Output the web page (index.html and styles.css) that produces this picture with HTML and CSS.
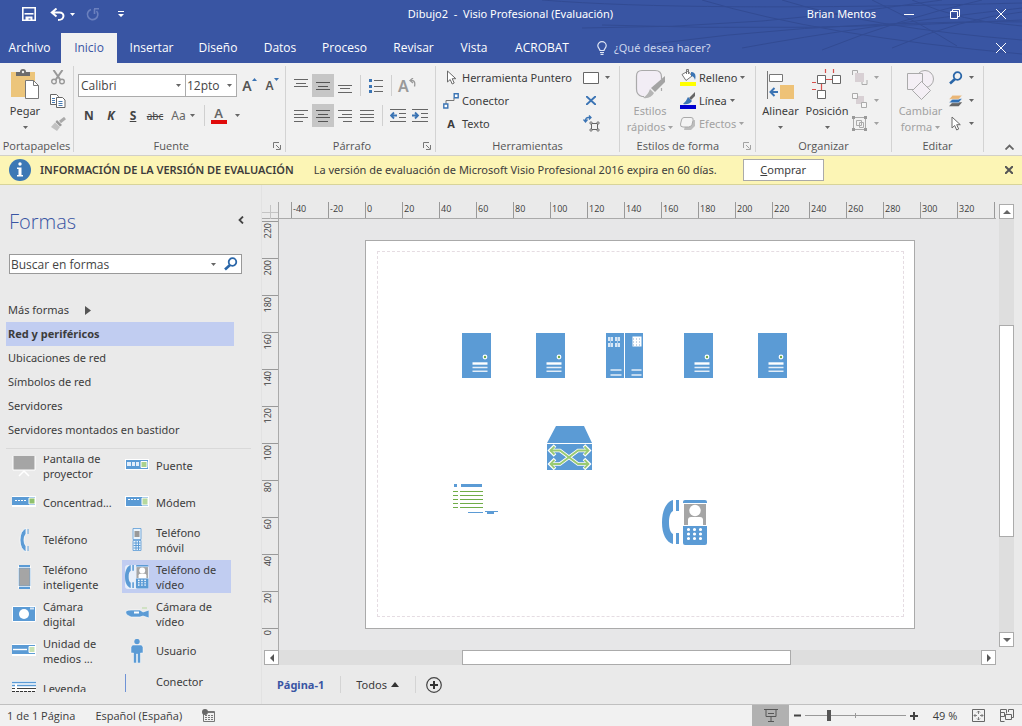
FILE: index.html
```html
<!DOCTYPE html>
<html lang="es">
<head>
<meta charset="utf-8">
<title>Dibujo2 - Visio Profesional (Evaluación)</title>
<link rel="stylesheet" href="styles.css">
</head>
<body>
<svg class="defs" aria-hidden="true">
  <symbol id="caret" viewBox="0 0 5 3"><path d="M0 0h5L2.500 3z" fill="currentColor"/></symbol>
  <symbol id="launcher" viewBox="0 0 8 8"><path d="M.5 6V.5H6M3 3l3.500 3.500M7.500 3v4.500H3" fill="none" stroke="currentColor"/></symbol>
  <symbol id="glass" viewBox="0 0 14 14"><circle cx="8.500" cy="5" r="3.800" fill="none" stroke="#2a66a8" stroke-width="1.800"/><path d="M6 8l-5 4.500" stroke="#2a66a8" stroke-width="2.600"/></symbol>
  <symbol id="pointer" viewBox="0 0 11 15"><path d="M1.500 1v11l2.700-2.500 2 4.500 2-1-2-4.300h3.600z" fill="#fff" stroke="#6a6a6a"/></symbol>
  <symbol id="server" viewBox="0 0 30 45"><path fill="#5b9bd5" d="M0 0h29v45H0z"/><circle cx="23" cy="24" r="1.800" fill="#70ad47" stroke="#fff" stroke-width="1.200"/><path d="M10.500 30.500h15" stroke="#fff" stroke-width="2.400"/><path d="M10.500 34.500h15M10.500 38.200h15" stroke="#e4eef8" stroke-width="1.600"/></symbol>
  <symbol id="videophone" viewBox="0 0 46 46"><path fill="#5b9bd5" d="M11 0v11C8 13 7 17 7 22.500S8 32 11 34v10C4 42 0 34 0 22.500S4 2 11 0zM14 0h3v11h-3zM14 33h3v11h-3zM23 0h20a2 2 0 0 1 2 2v1H21V2a2 2 0 0 1 2-2zM21 26h24v17a2 2 0 0 1-2 2H23a2 2 0 0 1-2-2z"/><path fill="#a5a5a5" d="M22 4h22v21H22z"/><g fill="#fff"><circle cx="33" cy="10.500" r="5.700"/><path d="M26 25v-5q0-3 3-3h9q3 0 3 3v5z"/></g><path d="M26.500 29.500h12.500M26.500 34h12.500M26.500 38.500h12.500" fill="none" stroke="#fff" stroke-width="3.200" stroke-linecap="round" stroke-dasharray="0 6"/></symbol>
</svg>

<header class="top">
  <svg class="swirls" viewBox="0 0 480 63" aria-hidden="true"><path d="M0 0Q150 12 480 3M60 25Q260 32 480 20M40 28Q220 28 400 0M110 44Q260 24 420 22T480 34M160 0Q280 36 480 54M240 0Q330 28 480 40M280 50Q360 18 440 0M350 48Q420 18 480 12M370 0Q420 22 480 26M200 48Q320 26 480 8M330 0Q380 24 415 46" fill="none" stroke="#324b93"/></svg>
  <div class="titlebar">
    <div class="quick">
      <button aria-label="Guardar"><svg width="14" height="14" viewBox="0 0 14 14"><path d="M.8.800h12.400v12.400H.8z" fill="none" stroke="#fff" stroke-width="1.600"/><path d="M2.500 6.800h9" stroke="#fff" stroke-width="1.600"/><path d="M3.500 9.500h7V14H8.500v-2.500h-2V14h-3z" fill="#fff"/></svg></button>
      <button class="undo" aria-label="Deshacer"><svg width="15" height="13" viewBox="0 0 15 13"><path d="M6.500.5L1.800 4.500 6.500 8.500M2 4.500h7.500c5.500 0 5.500 7.500-1.500 7.500" fill="none" stroke="#fff" stroke-width="2"/></svg><svg class="caret"><use href="#caret"/></svg></button>
      <button aria-label="Rehacer"><svg width="14" height="13" viewBox="0 0 14 13"><path d="M5 1.500A5.200 5.200 0 1 0 10.500 3M8 .8h5M8.500 1v5" fill="none" stroke="#6b80be" stroke-width="1.600"/></svg></button>
      <button aria-label="Personalizar barra"><svg width="6" height="7" viewBox="0 0 6 7"><path d="M0 0h6v1H0zM0 3h6L3 6z" fill="#fff"/></svg></button>
    </div>
    <span class="doc">Dibujo2 &nbsp;- &nbsp;Visio Profesional (Evaluación)</span>
    <span class="user">Brian Mentos</span>
    <div class="win">
      <button aria-label="Minimizar"><svg width="10" height="10"><path d="M0 5.500h10" stroke="#fff"/></svg></button>
      <button aria-label="Restaurar"><svg width="10" height="10"><path d="M.5 2.500h7v7h-7zM2.500 2V.5h7v7H8" fill="none" stroke="#fff"/></svg></button>
      <button aria-label="Cerrar"><svg width="10" height="10"><path d="M0 0l10 10M10 0L0 10" stroke="#fff"/></svg></button>
    </div>
  </div>
  <nav class="tabs">
    <button class="tab file">Archivo</button><button class="tab on">Inicio</button><button class="tab t1">Insertar</button><button class="tab t2">Diseño</button><button class="tab t3">Datos</button><button class="tab t1">Proceso</button><button class="tab t1">Revisar</button><button class="tab t4">Vista</button><button class="tab t5">ACROBAT</button>
    <button class="tell"><svg width="10" height="14" viewBox="0 0 10 14"><path d="M3 9.500C3 8 .8 7 .8 4.800a4.200 4.200 0 0 1 8.400 0C9.200 7 7 8 7 9.500zM3 11.500h4M3.500 13.300h3" fill="none" stroke="#dfe5f4" stroke-width="1.200"/></svg>¿Qué desea hacer?</button>
    <button class="closedoc" aria-label="Cerrar documento"><svg width="10" height="10"><path d="M0 0l10 10M10 0L0 10" stroke="#fff"/></svg></button>
  </nav>
</header>

<section class="ribbon">
  <div class="group g1">
    <div class="body">
      <button class="big paste"><svg width="32" height="32" viewBox="0 0 32 32"><path fill="#ecc57b" d="M2 3h24v25H2z"/><path fill="#6c6c6c" d="M7 7V3h4q0-3 3-3t3 3h4v4z"/><circle cx="14" cy="3" r="1.200" fill="#f1f1f1"/><path d="M16.500 11.500h8l5 5v13h-13z" fill="#fff" stroke="#777"/><path d="M24.500 11.500v5h5" fill="none" stroke="#777"/></svg><span>Pegar</span><svg class="caret"><use href="#caret"/></svg></button>
      <div class="stack">
        <button aria-label="Cortar"><svg width="14" height="15" viewBox="0 0 14 15"><g fill="none" stroke="#999" stroke-width="1.400"><circle cx="3" cy="11.500" r="2.300"/><circle cx="11" cy="11.500" r="2.300"/><path d="M2.500 0l7 10M11.500 0l-7 10" stroke-width="2"/></g></svg></button>
        <button aria-label="Copiar"><svg width="16" height="14" viewBox="0 0 16 14"><g fill="#fff" stroke="#666"><path d="M.5.500h6l2 2v8h-8z"/><path d="M6.500 3.500h6l2.500 2.500v7.500H6.500z"/></g><path d="M2 4.500h3M2 6.500h3M2 8.500h3M8.500 7.500h4M8.500 9.500h4M8.500 11.500h4" stroke="#4679b0"/></svg></button>
        <button aria-label="Copiar formato"><svg width="15" height="14" viewBox="0 0 15 14"><path d="M14 1L9 5" stroke="#aaa" stroke-width="3"/><path d="M6 3l5 5-2 1.500L4.500 5z" fill="#999"/><path d="M4 5.500L9 10l-3 4-6-4z" fill="#c2c2c2"/></svg></button>
      </div>
    </div>
    <div class="name">Portapapeles</div>
  </div>

  <div class="group g2">
    <div class="body col">
      <div class="row">
        <span class="combo face"><select aria-label="Fuente"><option>Calibri</option></select><svg class="caret"><use href="#caret"/></svg></span>
        <span class="combo size"><select aria-label="Tamaño"><option>12pto</option></select><svg class="caret"><use href="#caret"/></svg></span>
        <button class="grow" aria-label="Aumentar fuente"><b class="ga">A</b><svg width="5" height="3"><path d="M0 3h5L2.500 0z" fill="#3b74b4"/></svg></button>
        <button class="grow small" aria-label="Reducir fuente"><b class="ga">A</b><svg width="5" height="3"><path d="M0 0h5L2.500 3z" fill="#3b74b4"/></svg></button>
      </div>
      <div class="row fmt">
        <button><b>N</b></button><button><b><i>K</i></b></button><button><b><u>S</u></b></button><button class="abc"><s>abc</s></button><button class="aa">Aa<svg class="caret"><use href="#caret"/></svg></button><i class="vr"></i><button class="fc"><span class="fa">A</span><svg class="caret"><use href="#caret"/></svg></button>
      </div>
    </div>
    <div class="name">Fuente<button class="launch" aria-label="Más opciones de fuente"><svg width="8" height="8"><use href="#launcher"/></svg></button></div>
  </div>

  <div class="group g3">
    <div class="body col">
      <div class="row ic">
        <button aria-label="Arriba"><svg width="14" height="14"><path d="M0 .5h14M2 4.500h10M0 7.500h14" stroke="#666"/></svg></button>
        <button class="sel" aria-label="Medio"><svg width="14" height="14"><path d="M0 3.500h14M2 7.500h10M0 10.500h14" stroke="#555"/></svg></button>
        <button aria-label="Abajo"><svg width="14" height="14"><path d="M0 6.500h14M2 9.500h10M0 13.500h14" stroke="#666"/></svg></button>
        <i class="vr"></i>
        <button aria-label="Viñetas"><svg width="14" height="16"><path d="M5 2.500h9M5 8.500h9M5 13.500h9" stroke="#666"/><path d="M0 1h3v3H0zM0 7h3v3H0zM0 12h3v3H0z" fill="#3b74b4"/></svg></button>
        <i class="vr"></i>
        <button class="rot" aria-label="Girar texto"><b>A</b><svg width="7" height="9" viewBox="0 0 7 9"><path d="M4 0L1 2.500 4 5M1 2.500q6-1 4.500 6" fill="none" stroke="#999" stroke-width="1.300"/></svg></button>
      </div>
      <div class="row ic">
        <button aria-label="Izquierda"><svg width="14" height="12"><path d="M0 .5h14M0 4.500h10M0 7.500h14M0 11.500h9" stroke="#666"/></svg></button>
        <button class="sel" aria-label="Centrar"><svg width="14" height="12"><path d="M0 .5h14M2 4.500h10M0 7.500h14M2 11.500h10" stroke="#555"/></svg></button>
        <button aria-label="Derecha"><svg width="14" height="12"><path d="M0 .5h14M4 4.500h10M0 7.500h14M5 11.500h9" stroke="#666"/></svg></button>
        <button aria-label="Justificar"><svg width="14" height="12"><path d="M0 .5h14M0 4.500h14M0 7.500h14M0 11.500h14" stroke="#666"/></svg></button>
        <i class="vr"></i>
        <button aria-label="Reducir sangría"><svg width="16" height="14"><path d="M0 .5h16M9 4.500h7M9 8.500h7M0 12.500h16" stroke="#666"/><path d="M7 6.500H1M4 3.500l-3 3 3 3" fill="none" stroke="#3b74b4" stroke-width="1.800"/></svg></button>
        <button aria-label="Aumentar sangría"><svg width="16" height="14"><path d="M0 .5h16M9 4.500h7M9 8.500h7M0 12.500h16" stroke="#666"/><path d="M0 6.500h6M3 3.500l3 3-3 3" fill="none" stroke="#3b74b4" stroke-width="1.800"/></svg></button>
      </div>
    </div>
    <div class="name">Párrafo<button class="launch" aria-label="Más opciones de párrafo"><svg width="8" height="8"><use href="#launcher"/></svg></button></div>
  </div>

  <div class="group g4">
    <div class="body">
      <div class="stack left">
        <button><span class="i16"><svg width="11" height="15"><use href="#pointer"/></svg></span>Herramienta Puntero</button>
        <button><span class="i16"><svg width="16" height="16"><path d="M3 11V7.500h8V5" fill="none" stroke="#777"/><path d="M.8 11h4v4h-4zM11.200.800h4v4h-4z" fill="#fff" stroke="#3b74b4" stroke-width="1.400"/></svg></span>Conector</button>
        <button><span class="i16"><b>A</b></span>Texto</button>
      </div>
      <div class="stack left">
        <button aria-label="Rectángulo"><svg width="16" height="12"><path d="M.5.500h15v11H.5z" fill="#fff" stroke="#666"/></svg><svg class="caret"><use href="#caret"/></svg></button>
        <button class="mid" aria-label="Punto de conexión"><svg width="10" height="9"><path d="M0 0l10 9M10 0L0 9" stroke="#3b74b4" stroke-width="2"/></svg></button>
        <button class="mid" aria-label="Bloque de texto"><svg width="17" height="17"><path d="M8.500 8.500h6v6h-6z" fill="none" stroke="#666"/><path d="M7 7h2v2H7zM14 7h2v2h-2zM7 14h2v2H7zM14 14h2v2h-2z" fill="#f1f1f1" stroke="#666" stroke-width=".8"/><path d="M2.500 7V5.500q0-3 3-3h2M.5 4.500l2 2.500 2-2.500M6 .5l2 2-2 2" fill="none" stroke="#3b74b4" stroke-width="1.300"/></svg></button>
      </div>
    </div>
    <div class="name">Herramientas</div>
  </div>

  <div class="group g5">
    <div class="body">
      <button class="big dim"><svg width="32" height="32" viewBox="0 0 32 32"><path d="M10 27.500H8Q2.500 26 2.500 20V7Q2.500 1.500 8 1.500h13Q27.500 1.500 27.500 8v2M27.500 19v3" fill="#f2edf5" stroke="#aaa" stroke-width="1.200"/><path d="M31 7v6L21 23l-4-4z" fill="#a4a4a4"/><path d="M16 20l4 4q-3 6-11 5 5-3 7-9z" fill="#b5b5b5"/></svg><span>Estilos<br>rápidos <svg class="caret"><use href="#caret"/></svg></span></button>
      <div class="stack left">
        <button><svg width="16" height="17" viewBox="0 0 16 17"><path fill="#ff0" d="M0 13h16v4H0z"/><path d="M2 5.500L8 2l4 5-6 4.500z" fill="#fff" stroke="#777"/><path d="M6.500 5V.5h2V5" fill="none" stroke="#777"/><path d="M11 3q6 0 4 8-1-4-4-4z" fill="#3b74b4"/></svg>Relleno<svg class="caret"><use href="#caret"/></svg></button>
        <button><svg width="16" height="17" viewBox="0 0 16 17"><path fill="#0000d0" d="M0 13h16v4H0z"/><path d="M15 0v4l-4 4-2-2z" fill="#666"/><path d="M8 5l4 4q-3 4-9 3 3-2 5-7z" fill="#3b74b4"/></svg>Línea<svg class="caret"><use href="#caret"/></svg></button>
        <button class="dim"><svg width="16" height="15" viewBox="0 0 16 15"><path d="M6 5l9-1v6l-4 4H4z" fill="#bdbdbd"/><path d="M4 1.500h7q3 0 2 3l-1 4q-1 2.500-3.500 2.500H3q-3 0-2.500-3l1-4q.5-2.500 2.500-2.500z" fill="#f4f4f4" stroke="#aaa"/></svg>Efectos<svg class="caret"><use href="#caret"/></svg></button>
      </div>
    </div>
    <div class="name">Estilos de forma<button class="launch dim" aria-label="Más estilos"><svg width="8" height="8"><use href="#launcher"/></svg></button></div>
  </div>

  <div class="group g6">
    <div class="body">
      <button class="big"><svg width="32" height="32" viewBox="0 0 32 32"><path d="M2.500 2v28" stroke="#777"/><path d="M4.500 5.500h13v7h-13z" fill="#fff" stroke="#777"/><path fill="#eec277" d="M15 16h14v14H15z"/><path d="M13 23H6M9.500 19L5.500 23l4 4" fill="none" stroke="#3b74b4" stroke-width="2"/></svg><span>Alinear</span><svg class="caret"><use href="#caret"/></svg></button>
      <button class="big"><svg width="32" height="32" viewBox="0 0 32 32"><path d="M14.500 0v4M22.500 0v4M15 10.500h7M1 13.500h4M1 20.500h4M10.500 14v7" stroke="#d8504c" stroke-width="1.200"/><path d="M6.500 6.500h8v8h-8zM21.500 6.500h8v8h-8zM6.500 21.500h8v8h-8z" fill="#fff" stroke="#666"/></svg><span>Posición</span><svg class="caret"><use href="#caret"/></svg></button>
      <div class="stack left dim">
        <button aria-label="Traer al frente"><svg width="16" height="15"><path d="M3 3h9v9H3z" fill="#d8d0d4"/><path d="M.5 5V.5h5V3M15 10v4.500h-5V12" fill="none" stroke="#aaa"/></svg><svg class="caret"><use href="#caret"/></svg></button>
        <button aria-label="Enviar al fondo"><svg width="16" height="15"><path d="M4 3h8v8H4z" fill="#d8d0d4"/><path d="M.5.500h5v5h-5zM9.500 9.500h5v5h-5z" fill="#f7f7f7" stroke="#aaa"/></svg><svg class="caret"><use href="#caret"/></svg></button>
        <button aria-label="Agrupar"><svg width="16" height="15"><path d="M1.500 1.500h12v12h-12zM4.500 4.500h5v5h-5zM7.500 6.500h4v5h-4z" fill="none" stroke="#aaa"/><path d="M0 0h3v3H0zM12 0h3v3h-3zM0 12h3v3H0zM12 12h3v3h-3z" fill="#999"/></svg><svg class="caret"><use href="#caret"/></svg></button>
      </div>
    </div>
    <div class="name">Organizar</div>
  </div>

  <div class="group g7">
    <div class="body">
      <button class="big dim"><svg width="32" height="32" viewBox="0 0 32 32"><g fill="#f4eff5" stroke="#aaa"><circle cx="20" cy="10" r="8.500"/><path d="M2.500 4.500h15v16h-15z"/><path d="M16.500 12.500l9 9-9 9-9-9z"/></g></svg><span>Cambiar<br>forma <svg class="caret"><use href="#caret"/></svg></span></button>
      <div class="stack left">
        <button aria-label="Buscar"><svg width="14" height="14"><use href="#glass"/></svg><svg class="caret"><use href="#caret"/></svg></button>
        <button aria-label="Capas"><svg width="16" height="14" viewBox="0 0 16 14"><path d="M4 8.500h11l-4 4.500H0z" fill="#666"/><path d="M4 4.500h11l-4 4.500H0z" fill="#2f71b8" stroke="#f0f0f0" stroke-width=".6"/><path d="M4 .5h11L11 5H0z" fill="#eab676" stroke="#f0f0f0" stroke-width=".6"/></svg><svg class="caret"><use href="#caret"/></svg></button>
        <button aria-label="Seleccionar"><svg width="14" height="15"><use href="#pointer"/></svg><svg class="caret"><use href="#caret"/></svg></button>
      </div>
    </div>
    <div class="name">Editar</div>
  </div>
  <button class="collapse" aria-label="Contraer la cinta"><svg width="9" height="6"><path d="M.5 5.500l4-4 4 4" fill="none" stroke="#666" stroke-width="1.800"/></svg></button>
</section>

<section class="notice">
  <svg width="22" height="22" viewBox="0 0 22 22"><circle cx="11" cy="11" r="11" fill="#3c78b5"/><circle cx="11" cy="5" r="1.700" fill="#fff"/><path d="M8 8.500h4.500V16H14v1.500H8V16h1.500v-6H8z" fill="#fff"/></svg>
  <strong>INFORMACIÓN DE LA VERSIÓN DE EVALUACIÓN</strong>
  <span>La versión de evaluación de Microsoft Visio Profesional 2016 expira en 60 días.</span>
  <button class="buy"><u>C</u>omprar</button>
  <button class="x" aria-label="Cerrar aviso"><svg width="8" height="8"><path d="M0 0l8 8M8 0L0 8" stroke="#555" stroke-width="2"/></svg></button>
</section>

<main class="work">
  <aside class="shapes">
    <div class="head"><h1>Formas</h1><button aria-label="Minimizar panel"><svg width="6" height="8"><path d="M5 .5L1.500 4 5 7.500" fill="none" stroke="#444" stroke-width="1.800"/></svg></button></div>
    <div class="search"><input type="text" aria-label="Buscar en formas" value="Buscar en formas"><svg class="caret"><use href="#caret"/></svg><button aria-label="Buscar"><svg width="14" height="14"><use href="#glass"/></svg></button></div>
    <div class="stencils">
      <button>Más formas<svg class="more" width="6" height="9"><path d="M0 0l6 4.500L0 9z" fill="#555"/></svg></button>
      <button class="cur">Red y periféricos</button>
      <button>Ubicaciones de red</button>
      <button>Símbolos de red</button>
      <button>Servidores</button>
      <button>Servidores montados en bastidor</button>
    </div>
    <div class="clip"><div class="masters">
      <button><svg viewBox="0 0 24 24"><path d="M1 0h22v16H1z" fill="#a5a5a5" stroke="#fff"/><path d="M7 22l5-5 5 5" fill="none" stroke="#fff" stroke-width="1.500"/></svg><span>Pantalla de proyector</span></button>
      <button><svg viewBox="0 0 24 24"><path d="M0 5h24v11H0z" fill="#fff"/><path d="M1 6h22v9H1z" fill="#5b9bd5"/><path d="M2 8h4v4H2zM7 8h3v4H7zM11 8h3v4h-3z" fill="#e3eefa"/><path d="M16 7.500h6v6h-6z" fill="#a9d18e" stroke="#fff"/></svg><span>Puente</span></button>
      <button><svg viewBox="0 0 24 24"><path d="M0 5h24v11H0z" fill="#fff"/><path d="M0 6h23v8H0z" fill="#5b9bd5"/><path d="M3 9.500h12" stroke="#fff" stroke-dasharray="2 1"/><path d="M17 7h6v6h-6z" fill="#8fc16d" stroke="#fff"/></svg><span>Concentrad...</span></button>
      <button><svg viewBox="0 0 24 24"><path d="M0 5h24v11H0z" fill="#fff"/><path d="M1 6h22v9H1z" fill="#5b9bd5"/><path d="M3 8.500h11" stroke="#fff" stroke-dasharray="2 1"/><path d="M17 7h6v7h-6z" fill="#b6d99e" stroke="#fff"/></svg><span>Módem</span></button>
      <button><svg viewBox="0 0 24 24"><path d="M14 0Q8 3 8 12t6 12v-6q-2-2-2-6t2-6zM15.500 1v5M15.500 18v5" fill="#5b9bd5" stroke="#fff" stroke-width=".8"/><path d="M16 1v5M16 18v5" stroke="#5b9bd5"/></svg><span>Teléfono</span></button>
      <button><svg viewBox="0 0 24 24"><path d="M8 .5h8v11H8zM8 12.500h8v10H8z" fill="#eaf3fb" stroke="#5b9bd5" stroke-width=".8"/><path d="M9.500 3h5v6h-5z" fill="#999"/><path d="M8.500 15h7M8.500 17.500h7M8.500 20h7M11 13v9M13.500 13v9" stroke="#5b9bd5"/></svg><span>Teléfono móvil</span></button>
      <button><svg viewBox="0 0 24 24"><rect x="6" y="0" width="13" height="24" rx="2" fill="#fff"/><path d="M7 1h11M7 23h11" stroke="#5b9bd5" stroke-width="2"/><path d="M7 3h11v18H7z" fill="#a5a5a5" stroke="#5b9bd5" stroke-width=".6"/></svg><span>Teléfono inteligente</span></button>
      <button class="cur"><svg viewBox="0 0 24 24"><rect x="0" y="0" width="24" height="24" rx="3" fill="#e8effa"/><use href="#videophone" width="24" height="24"/></svg><span>Teléfono de vídeo</span></button>
      <button><svg viewBox="0 0 24 24"><path d="M.5 4.500h23v15H.5z" fill="#5b9bd5" stroke="#fff"/><circle cx="12" cy="12" r="5" fill="#fff"/><path d="M18 6.500h4" stroke="#cfe2f5" stroke-width="2"/></svg><span>Cámara<br>digital</span></button>
      <button><svg viewBox="0 0 24 24"><path d="M1 9q2-1 5-1h9l3 2 6-2v8l-6-2-3 1H6l-4-2q-2-2-1-4z" fill="#5b9bd5" stroke="#fff" stroke-width=".6"/><path d="M9 10.500h5" stroke="#fff" stroke-width="2"/><path d="M17 6h5" stroke="#b6d99e"/></svg><span>Cámara de vídeo</span></button>
      <button><svg viewBox="0 0 24 24"><path d="M0 5h24v12H0z" fill="#fff"/><path d="M0 6h23v9H0z" fill="#5b9bd5"/><path d="M1 10.500h14" stroke="#fff" stroke-width="1.400"/><path d="M17 7.500h6v6h-6z" fill="#c7e2b4" stroke="#fff"/></svg><span>Unidad de medios ...</span></button>
      <button><svg viewBox="0 0 24 24"><circle cx="12" cy="2.500" r="2.700" fill="#5b9bd5"/><path d="M7.500 6h9l1.500 2v6h-2.500v10h-3v-9h-1v9h-3V14H6V8z" fill="#5b9bd5" stroke="#fff" stroke-width=".5"/></svg><span>Usuario</span></button>
      <button class="last"><svg viewBox="0 0 24 24"><path d="M0 0h24v10H0z" fill="#fff"/><path d="M0 1.500h24M0 4.500h3M5 4.500h19" stroke="#5b9bd5" stroke-width="1.500"/><path d="M0 7.500h3M5 7.500h19" stroke="#444"/><path d="M0 10.500h24" stroke="#333" stroke-dasharray="3 1"/></svg><span>Leyenda</span></button>
      <button class="last line"><svg viewBox="0 0 24 24"><path d="M0 0h1v20H0z" fill="#6f93d6"/></svg><span>Conector</span></button>
    </div></div>
  </aside>

  <section class="drawing">
    <div class="origin"><svg width="16" height="17"><path d="M8.500 3v14M0 10.500h16" stroke="#c4c4c4"/></svg></div>
    <div class="hruler"><span>-40</span><span>-20</span><span>0</span><span>20</span><span>40</span><span>60</span><span>80</span><span>100</span><span>120</span><span>140</span><span>160</span><span>180</span><span>200</span><span>220</span><span>240</span><span>260</span><span>280</span><span>300</span><span>320</span><span></span></div>
    <div class="vruler"><div><span>220</span></div><div><span>200</span></div><div><span>180</span></div><div><span>160</span></div><div><span>140</span></div><div><span>120</span></div><div><span>100</span></div><div><span>80</span></div><div><span>60</span></div><div><span>40</span></div><div><span>20</span></div><div><span>0</span></div></div>
    <div class="canvas">
      <div class="page">
        <div class="margin"></div>
        <svg class="node n1" width="30" height="45"><use href="#server"/></svg>
        <svg class="node n2" width="30" height="45"><use href="#server"/></svg>
        <svg class="node n3" width="37" height="45" viewBox="0 0 37 45"><path d="M0 0h18v45H0zM19 0h18v45H19z" fill="#5b9bd5"/><path d="M2 4h5v4H2zM9 4h5v4H9zM2 10h5v4H2zM9 10h5v4H9z" fill="#d8e7f5"/><path d="M4.500 4v10M11.500 4v10" stroke="#9fc4e8"/><path d="M26.500 3.500h9v10h-9z" fill="#fff"/><path d="M27 6h8M27 9h8M27 12h8" stroke="#8aa8c8" stroke-dasharray="1 2"/><path d="M4.500 37h11M4.500 42h11M25.500 37h10M25.500 42h10" stroke="#e4eef8" stroke-width="1.600"/></svg>
        <svg class="node n4" width="30" height="45"><use href="#server"/></svg>
        <svg class="node n5" width="30" height="45"><use href="#server"/></svg>
        <svg class="node n6" width="45" height="44" viewBox="0 0 45 44"><path d="M9 0h28l8 17H0zM0 18h45v26H0z" fill="#5b9bd5"/><g fill="none" stroke="#fff" stroke-width="3.600"><path d="M3 24.500h10L31 38h10M3 38h10l18-13.500h10"/><path d="M8 19.500L3 24.500l5 5M8 33l-5 5 5 5M37 19.500l5 5-5 5M37 33l5 5-5 5"/></g><g fill="none" stroke="#9aca73" stroke-width="1.800"><path d="M3 24.500h10L31 38h10M3 38h10l18-13.500h10"/><path d="M7.500 20.500L3.500 24.500l4 4M7.500 34l-4 4 4 4M37.500 20.500l4 4-4 4M37.500 34l4 4-4 4"/></g></svg>
        <svg class="node n7" width="46" height="32" viewBox="0 0 46 32"><path d="M1 0h3v3H1zM8 0h21v3H8zM32 27h13v1h-4v2h-7v-2h-2z" fill="#5b9bd5"/><path d="M15 28h15v1H15z" fill="#5b9bd5"/><path d="M0 7h5v1H0zM7 7h23v1H7zM0 11h5v1H0zM7 11h23v1H7zM0 15h5v1H0zM7 15h23v1H7zM0 19h5v1H0zM7 19h23v1H7zM0 23h5v1H0zM7 23h23v1H7z" fill="#70ad47"/></svg>
        <svg class="node n8" width="46" height="46"><use href="#videophone"/></svg>
      </div>
    </div>
    <div class="vscroll"><button aria-label="Subir"><svg width="8" height="4"><path d="M0 4h8L4 0z" fill="#666"/></svg></button><div class="track"><i class="thumb"></i></div><button aria-label="Bajar"><svg width="8" height="4"><path d="M0 0h8L4 4z" fill="#666"/></svg></button></div>
    <div class="hscroll"><button aria-label="Izquierda"><svg width="4" height="8"><path d="M4 0v8L0 4z" fill="#555"/></svg></button><div class="track"><i class="thumb"></i></div><button aria-label="Derecha"><svg width="4" height="8"><path d="M0 0v8l4-4z" fill="#555"/></svg></button></div>
    <div class="pages"><button class="cur">Página-1</button><button class="all">Todos<svg width="8" height="5"><path d="M0 5h8L4 0z" fill="#333"/></svg></button><button class="add" aria-label="Insertar página"><svg width="16" height="16"><circle cx="8" cy="8" r="7.300" fill="none" stroke="#444" stroke-width="1.200"/><path d="M4 8h8M8 4v8" stroke="#333" stroke-width="2"/></svg></button></div>
  </section>
</main>

<footer class="status">
  <span>1 de 1 Página</span><span>Español (España)</span>
  <button aria-label="Macros"><svg width="14" height="13" viewBox="0 0 14 13"><path d="M1.500 4v8.500h11v-10H5" fill="none" stroke="#777"/><path d="M3 6.500h8M3 8.500h8M3 10.500h8" stroke="#777" stroke-dasharray="2 1"/><circle cx="3" cy="3" r="3" fill="#666"/><path d="M6 3h6" stroke="#777" stroke-width="2"/></svg></button>
  <div class="zoom">
    <button class="present" aria-label="Presentación"><svg width="14" height="13"><path d="M0 .5h14M2 1v6.500h10V1M4 4.500h6M7 8v4M4 12.500h6" fill="none" stroke="#555"/></svg></button>
    <button aria-label="Alejar"><svg width="7" height="7"><path d="M0 3.500h7" stroke="#444" stroke-width="2"/></svg></button>
    <input type="range" min="0" max="100" value="23" aria-label="Zoom">
    <button aria-label="Acercar"><svg width="8" height="8"><path d="M0 4h8M4 0v8" stroke="#444" stroke-width="2"/></svg></button>
    <button class="pct">49 %</button>
    <button aria-label="Ajustar a la ventana"><svg width="13" height="13"><path d="M.5.500h12v12H.5z" fill="none" stroke="#666"/><path d="M6.500 2v3M6.500 8v3M2 6.500h3M8 6.500h3M5 3.500l1.500-1.500L8 3.500M5 9.500L6.500 11 8 9.500M3.500 5L2 6.500 3.500 8M9.500 5L11 6.500 9.500 8" fill="none" stroke="#666" stroke-width=".8"/></svg></button>
    <button aria-label="Cambiar ventanas"><svg width="14" height="13"><path d="M.5 4.500v-4h6v4M8.500 3V.5h5v8H12M.5 7v5.500h4M.5 3.500h4v4h-4zM5.500 5.500h6v5h-6z" fill="none" stroke="#666"/></svg></button>
  </div>
</footer>
</body>
</html>
```

FILE: styles.css
```css
* { box-sizing: border-box; }
body {
  margin: 0;
  min-height: 100vh;
  display: flex;
  flex-direction: column;
  background: #eaeaea;
  color: #3c3c3c;
  font: 11px/16px "Noto Sans", "Open Sans", sans-serif;
}
button {
  display: inline-flex;
  align-items: center;
  justify-content: center;
  margin: 0;
  padding: 0;
  border: 0;
  background: none;
  color: inherit;
  font: inherit;
  white-space: nowrap;
}
svg { flex: none; }
.defs { position: absolute; width: 0; height: 0; }
.caret { width: 5px; height: 3px; color: #666; }

/* title bar and tabs */
.top { position: relative; background: #3955a3; color: #fff; overflow: hidden; }
.swirls { position: absolute; top: 0; right: 0; width: 480px; height: 63px; }
.titlebar { position: relative; display: flex; align-items: center; height: 28px; margin-bottom: 5px; }
.quick { display: flex; flex: 1; align-items: center; gap: 11px; padding-left: 22px; }
.quick .caret { color: #fff; margin-left: 5px; }
.quick button:first-child { margin-right: 3px; }
.quick button:last-child { margin-left: 7px; }
.doc { white-space: nowrap; }
.user { flex: 0 0 263px; text-align: right; white-space: nowrap; }
.win { display: flex; gap: 36px; padding: 0 16px 0 28px; }
.tabs { position: relative; display: flex; height: 30px; font: 12px/16px "Open Sans", "Noto Sans", sans-serif; }
.tab.file { width: 61px; padding-right: 2px; }
.tab.on { width: 56px; background: #f1f1f1; color: #3955a3; }
.tab.t1 { width: 69px; }
.tab.t2 { width: 64px; }
.tab.t3 { width: 60px; }
.tab.t4 { width: 52px; }
.tab.t5 { width: 84px; }
.tell { gap: 7px; padding-left: 13px; color: #cdd6ec; font-size: 11px; font-family: "Noto Sans", sans-serif; }
.closedoc { margin-left: auto; padding-right: 16px; }

/* ribbon */
.ribbon {
  display: flex;
  height: 93px;
  padding: 3px 0;
  background: #f1f1f1;
  border-bottom: 1px solid #d2d0c8;
}
.group { display: flex; flex-direction: column; border-right: 1px solid #d3d3d3; }
.g1 { width: 74px; }
.g2 { width: 212px; }
.g3 { width: 150px; }
.g4 { width: 184px; }
.g5 { width: 136px; }
.g6 { width: 136px; }
.g7 { width: 92px; }
.body { display: flex; flex: 1; min-height: 0; }
.name {
  display: flex;
  justify-content: center;
  align-items: center;
  height: 16px;
  padding-top: 4px;
  color: #555;
  font-family: "Open Sans", "Noto Sans", sans-serif;
  white-space: nowrap;
}
.g2 .name, .g3 .name, .g5 .name { justify-content: flex-end; }
.launch { padding-right: 4px; color: #777; }
.g2 .launch { margin-left: 84px; }
.g3 .launch { margin-left: 52px; }
.g5 .launch { margin-left: 24px; }
.big { flex-direction: column; justify-content: flex-start; padding-top: 3px; gap: 2px; }
.big svg.caret { margin-top: 5px; }
.big span svg.caret { margin: 0 0 2px; }
.dim, .dim .caret { color: #a2a2a2; }
.stack { display: flex; flex-direction: column; }
.stack button { height: 23px; }
.stack.left button { justify-content: flex-start; }
.paste { width: 50px; }
.g1 .stack { width: 16px; }
.col { flex-direction: column; }
.row { display: flex; align-items: center; height: 31px; }
.row:first-child { height: 23px; margin: 8px 0 3px; }
.g2 .body { padding-left: 4px; }
.combo { display: flex; align-items: center; position: relative; height: 23px; background: #fff; border: 1px solid #ababab; font: 12px/16px "Open Sans", "Noto Sans", sans-serif; }
.combo select { width: 100%; height: 100%; padding: 0 2px; border: 0; background: none; appearance: none; font: inherit; color: #444; }
.combo .caret { position: absolute; right: 4px; }
.face { width: 108px; }
.size { width: 52px; margin-left: -1px; }
.size select { padding: 0 1px; }
.grow { align-items: flex-start; width: 25px; color: #555; font-size: 14px; }
.grow.small { font-size: 12px; width: 20px; }
.grow b, .rot b { font-weight: 600; }
.fmt button { width: 22px; color: #444; font-size: 12px; }
.fmt .abc { font-size: 10px; }
.fmt .aa { width: 34px; gap: 4px; color: #666; }
.fmt .fc { width: 32px; gap: 8px; }
.fa { width: 16px; font-size: 13px; font-weight: 600; line-height: 13px; color: #666; border-bottom: 4px solid #e00b0b; }
.vr { width: 1px; height: 21px; margin: 0 4px; background: #d0d0d0; }
.ic { padding-left: 4px; }
.ic button { width: 22px; height: 23px; }
.ic .sel { background: #c6c6c6; }
.rot { color: #999; font-size: 16px; }
.ic .rot svg { margin-bottom: 6px; }
.g4 .body { padding-left: 7px; gap: 8px; }
.g4 .stack:first-child { width: 132px; }
.i16 { display: inline-flex; justify-content: center; width: 16px; margin-right: 3px; }
.g4 .stack:last-child button { gap: 6px; }
.g4 .stack .mid { justify-content: center; width: 16px; }
.g5 .body { padding-left: 4px; gap: 4px; }
.g5 .big { width: 52px; }
.g5 .stack button { gap: 3px; }
.g6 .big { width: 49px; }
.g6 .stack { padding-left: 3px; }
.g6 .stack button, .g7 .stack button { gap: 6px; }
.g6 .big:nth-child(2) { width: 44px; }
.g7 .big { width: 57px; }
.g7 .stack svg:first-child { width: 14px; }
.collapse { align-self: flex-end; height: 10px; margin-left: auto; padding-right: 8px; }

/* evaluation notice */
.notice {
  display: flex;
  align-items: center;
  height: 29px;
  padding: 0 9px;
  background: #fcf5b5;
  border-bottom: 1px solid #d8d49a;
  white-space: nowrap;
}
.notice strong { margin: 0 20px 0 9px; font-weight: 600; }
.buy { width: 81px; height: 22px; margin-left: 26px; background: #fff; border: 1px solid #aaa; }
.x { margin-left: auto; }

/* shapes pane */
.work { display: flex; flex: 1; }
.shapes { display: flex; flex-direction: column; width: 261px; }
.head { display: flex; justify-content: space-between; align-items: center; height: 53px; padding: 20px 17px 0 9px; }
.head h1 { margin: 0; color: #3955a3; font: 300 20px/32px "Open Sans", "Noto Sans", sans-serif; }
.head button { padding-bottom: 4px; }
.search { display: flex; align-items: center; width: 233px; height: 20px; margin: 16px 0 0 9px; background: #fff; border: 1px solid #999; }
.search input { flex: 1; min-width: 0; height: 18px; padding: 0 1px; border: 0; background: none; color: #444; font: 12px/16px "Open Sans", "Noto Sans", sans-serif; }
.search button { margin: 0 3px 0 8px; }
.stencils { display: flex; flex-direction: column; margin-top: 24px; padding: 0 27px 6px 6px; }
.stencils button { justify-content: flex-start; height: 24px; padding-left: 2px; }
.more { margin-left: 16px; }
.stencils .cur { background: #c1cdf1; font-weight: 700; }
.clip { margin: 0 10px 12px 6px; padding-top: 7px; border-top: 1px solid #d9d9d9; }
.masters { display: grid; grid-template-columns: 116px 109px; grid-auto-rows: 37px; height: 236px; overflow: hidden; }
.masters button { justify-content: flex-start; gap: 7px; height: 33px; margin-top: -7px; padding-left: 6px; text-align: left; line-height: 15px; white-space: normal; }
.masters button:nth-child(2n) { padding-left: 3px; }
.masters svg { width: 24px; height: 24px; }
.masters .cur { background: #c1cdf1; }
.masters .last { align-items: flex-start; padding-top: 10px; }
.masters .line { padding-top: 3px; }

/* drawing window */
.drawing {
  display: grid;
  flex: 1;
  min-width: 0;
  grid-template-columns: 17px 1fr 15px;
  grid-template-rows: 17px 1fr 15px 39px;
  padding: 17px 8px 0 0;
  border-left: 1px solid #e2e2e2;
}
.origin { border-right: 1px solid #aaa; border-bottom: 1px solid #aaa; }
.hruler, .vruler { font: 9px/13px "Open Sans", "Noto Sans", sans-serif; }
.hruler { display: flex; margin-right: 3px; padding-left: 12px; border-bottom: 1px solid #aaa; overflow: hidden; }
.hruler span { flex: none; width: 37px; height: 16px; padding-left: 1px; border-left: 1px solid #999; }
.vruler { padding-top: 2px; border-right: 1px solid #aaa; }
.vruler div { display: flex; height: 37px; padding: 1px 0 0 1px; border-top: 1px solid #999; align-items: flex-start; }
.vruler div:last-child { height: 18px; }
.vruler span { writing-mode: vertical-rl; transform: rotate(180deg); line-height: 10px; }
.canvas { padding: 21px 84px 21px 86px; background: #e7e7e8; }
.page { position: relative; height: 389px; background: #fff; border: 1px solid #aaa; }
.margin { position: absolute; inset: 10px 10px 11px 11px; border: 1px dashed #e5dce2; }
.node { position: absolute; }
.n1 { left: 96px; top: 92px; }
.n2 { left: 170px; top: 92px; }
.n3 { left: 240px; top: 92px; }
.n4 { left: 318px; top: 92px; }
.n5 { left: 392px; top: 92px; }
.n6 { left: 181px; top: 185px; }
.n7 { left: 87px; top: 243px; }
.n8 { left: 296px; top: 259px; }
.vscroll { grid-column: 3; grid-row: 1 / 3; display: flex; flex-direction: column; padding: 2px 0 3px; }
.hscroll { grid-column: 1 / 3; display: flex; padding: 0 3px 0 2px; }
.vscroll button, .hscroll button { flex: none; width: 15px; height: 15px; background: #fff; border: 1px solid #ababab; }
.track { display: flex; flex: 1; background: #dedede; }
.thumb { background: #fff; border: 1px solid #ababab; }
.hscroll .thumb { width: 47%; margin-left: 26%; }
.vscroll .track { flex-direction: column; }
.vscroll .track::before { content: ""; flex: 107; }
.vscroll .thumb { flex: 211; }
.vscroll .track::after { content: ""; flex: 96; }
.pages { grid-column: 1 / 4; display: flex; align-items: center; padding-left: 15px; }
.pages button { height: 17px; gap: 4px; padding-right: 16px; border-right: 1px solid #d4d4d4; }
.pages .all { padding-left: 15px; }
.pages .cur { color: #3955a3; font-weight: 700; }
.pages button.add { padding: 0 10px; border: 0; }

/* status bar */
.status {
  display: flex;
  align-items: center;
  gap: 20px;
  height: 22px;
  padding-left: 7px;
  background: #f1f1f1;
  border-top: 1px solid #c0c0c0;
  font-family: "Open Sans", "Noto Sans", sans-serif;
}
.zoom { display: flex; align-items: center; height: 21px; margin-left: auto; padding-right: 8px; }
.present { width: 37px; height: 21px; margin-right: 5px; background: #b1b1b1; }
.zoom input {
  width: 101px;
  height: 12px;
  margin: 0 4px;
  appearance: none;
  background: linear-gradient(#999, #999) center / 100% 1px no-repeat, linear-gradient(#999, #999) center / 1px 5px no-repeat;
}
.zoom input::-webkit-slider-thumb { appearance: none; width: 4px; height: 11px; background: #555; }
.pct { width: 54px; }
.pct + button { margin-right: 15px; }
```
